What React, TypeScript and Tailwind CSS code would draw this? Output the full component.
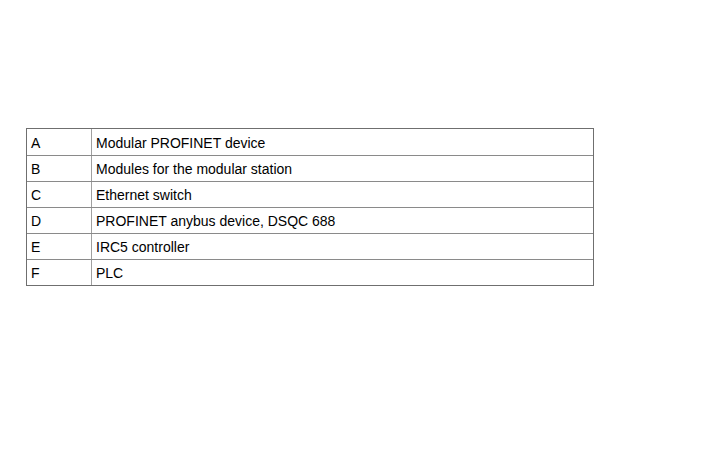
import React from "react";

const rows: [string, string][] = [
  ["A", "Modular PROFINET device"],
  ["B", "Modules for the modular station"],
  ["C", "Ethernet switch"],
  ["D", "PROFINET anybus device, DSQC 688"],
  ["E", "IRC5 controller"],
  ["F", "PLC"],
];

export default function App() {
  return (
    <div
      className="w-[710px] h-[470px] bg-white pt-[128px] pl-[26px]"
      style={{ fontFamily: '"Liberation Sans", Arial, sans-serif' }}
    >
      <div className="w-[568px] border border-[#6f6f6f] text-[14px] text-black">
        {rows.map(([k, v], i) => (
          <div
            key={k}
            className={`flex h-[26px] ${i > 0 ? "border-t border-[#8a8a8a]" : ""}`}
          >
            <div className="w-[65px] border-r border-[#a0a0a0] pl-[4px] pt-[2px] flex items-center">{k}</div>
            <div className="flex-1 pl-[4px] pt-[2px] flex items-center">{v}</div>
          </div>
        ))}
      </div>
    </div>
  );
}
